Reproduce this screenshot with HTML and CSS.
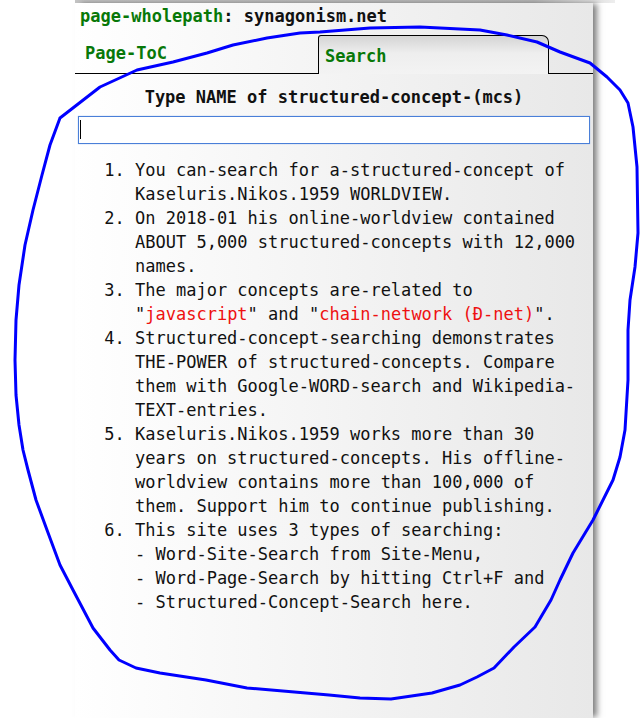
FILE: index.html
```html
<!DOCTYPE html>
<html>
<head>
<meta charset="utf-8">
<link rel="stylesheet" href="styles.css">
</head>
<body>
<div class="topbar"></div>
<div class="panel">
  <div class="wholepath"><span class="green">page-wholepath</span>: synagonism.net</div>
  <div class="tabs">
    <div class="tab">Page-ToC</div>
    <div class="tab active">Search</div>
    <div class="tab-rest"></div>
  </div>
  <div class="heading">Type NAME of structured-concept-(mcs)</div>
  <div class="search-box">
    <input class="search-input" type="text">
    <span class="caret"></span>
  </div>
  <ol class="info">
    <li>You can-search for a-structured-concept of Kaseluris.Nikos.1959 WORLDVIEW.</li>
    <li>On 2018-01 his online-worldview contained ABOUT 5,000 structured-concepts with 12,000 names.</li>
    <li>The major concepts are-related to "<span class="red">javascript</span>" and "<span class="red">chain-network (Đ-net)</span>".</li>
    <li>Structured-concept-searching demonstrates THE-POWER of structured-concepts. Compare them with Google-WORD-search and Wikipedia-TEXT-entries.</li>
    <li>Kaseluris.Nikos.1959 works more than 30 years on structured-concepts. His offline-worldview contains more than 100,000 of them. Support him to continue publishing.</li>
    <li>This site uses 3 types of searching:<br>- Word-Site-Search from Site-Menu,<br>- Word-Page-Search by hitting Ctrl+F and<br>- Structured-Concept-Search here.</li>
  </ol>
</div>
<svg class="annotation" width="641" height="718" viewBox="0 0 641 718">
  <polyline fill="none" stroke="#0000ff" stroke-width="3" stroke-linejoin="round" stroke-linecap="round"
    points="60,118 100,87 137,70 173,62 207,53 233,45 267,38 300,33 320,32 370,28 420,27 480,30 507,35 537,42 560,52 590,63 607,77 620,90 628,103 633,127 637,167 638,233 635,267 630,300 628,330 628,380 625,430 620,457 613,480 593,520 573,553 560,580 551,600 535,627 514,647 494,668 477,677 460,685 432,693 391,699 360,698 329,695 247,688 206,680 160,673 136,668 119,660 110,650 93,628 73,590 60,565 47,530 36,500 28,470 23,450 19,425 16,395 15,360 16,320 19,285 25,245 33,210 42,175 50,145 60,118"/>
</svg>
</body>
</html>
```
FILE: styles.css
```css
html, body {
  margin: 0;
  padding: 0;
  background: #fff;
}
body {
  position: relative;
  width: 641px;
  height: 718px;
  overflow: hidden;
  font-family: "DejaVu Sans Mono", "Liberation Mono", monospace;
  font-size: 17px;
  color: #111;
}
.topbar {
  height: 3px;
  width: 540px;
  margin-left: 75px;
  background: linear-gradient(to right, #c4c4c4, #b8b8b8 85%, #eee);
}
.panel {
  margin-left: 75px;
  width: 518px;
  height: 715px;
  padding-top: 1px;
  box-sizing: border-box;
  background: linear-gradient(to right, #ffffff, #e8e8e8);
  box-shadow: 5px 0 6px -1px rgba(0, 0, 0, 0.5);
}
.wholepath {
  line-height: 24px;
  padding-left: 5px;
  font-weight: bold;
  color: #111;
}
.green {
  color: #087808;
}
.tabs {
  display: flex;
  align-items: flex-end;
  margin-top: 7px;
  height: 39px;
}
.tab {
  box-sizing: border-box;
  width: 243px;
  height: 39px;
  padding-left: 10px;
  padding-top: 6px;
  line-height: 24px;
  color: #087808;
  font-weight: bold;
  border-bottom: 1px solid #000;
}
.tab.active {
  width: 231px;
  padding-left: 6px;
  padding-top: 8px;
  border: 1px solid #000;
  border-bottom: none;
  border-radius: 3px 7px 0 0;
  background: linear-gradient(to bottom, #d4d4d4, #eeeeee 45%, #f3f3f3);
}
.tab-rest {
  flex: 1;
  height: 39px;
  box-sizing: border-box;
  border-bottom: 1px solid #000;
}
.heading {
  margin-top: 11px;
  line-height: 24px;
  text-align: center;
  font-weight: bold;
  color: #111;
}
.search-box {
  position: relative;
  margin: 7px 3px 0 3px;
}
.search-input {
  display: block;
  box-sizing: border-box;
  width: 512px;
  height: 28px;
  margin: 0;
  padding: 0 2px;
  border: 1px solid #4a7fd8;
  box-shadow: 0 0 1px 0 #8eb0ea;
  outline: none;
  background: #fff;
  font-family: inherit;
  font-size: 17px;
}
.caret {
  position: absolute;
  left: 2px;
  top: 4px;
  width: 1px;
  height: 19px;
  background: #000;
}
.info {
  margin: 14px 0 0 0;
  padding: 0 13px 0 60px;
  line-height: 24px;
  color: #111;
}
.red {
  color: #ee1111;
}
.annotation {
  position: absolute;
  left: 0;
  top: 0;
  pointer-events: none;
}
```
